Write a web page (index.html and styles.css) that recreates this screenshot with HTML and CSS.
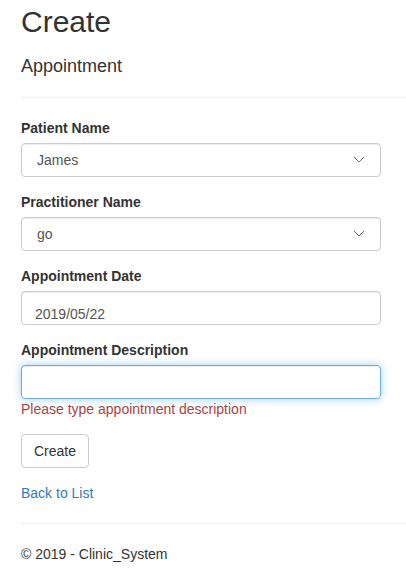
FILE: index.html
```html
<!DOCTYPE html>
<html>
<head>
<meta charset="utf-8">
<link rel="stylesheet" href="styles.css">
</head>
<body>
<div class="page">
  <h2 class="title">Create</h2>
  <form class="form">
    <h4 class="subtitle">Appointment</h4>
    <hr class="rule">
    <div class="group">
      <label class="label">Patient Name</label>
      <div class="select-wrap">
        <div class="control select">James</div>
        <svg class="chevron" width="12" height="7" viewBox="0 0 12 7"><path d="M1 1 L6 6 L11 1" fill="none" stroke="#666" stroke-width="1"/></svg>
      </div>
    </div>
    <div class="group">
      <label class="label">Practitioner Name</label>
      <div class="select-wrap">
        <div class="control select">go</div>
        <svg class="chevron" width="12" height="7" viewBox="0 0 12 7"><path d="M1 1 L6 6 L11 1" fill="none" stroke="#666" stroke-width="1"/></svg>
      </div>
    </div>
    <div class="group">
      <label class="label">Appointment Date</label>
      <div class="control date">2019/05/22</div>
    </div>
    <div class="group">
      <label class="label">Appointment Description</label>
      <div class="control focus"></div>
      <span class="error">Please type appointment description</span>
    </div>
    <div class="group">
      <button type="button" class="btn">Create</button>
    </div>
  </form>
  <div class="back"><a class="link" href="#">Back to List</a></div>
  <hr class="rule">
  <footer class="footer"><p class="copy">© 2019 - Clinic_System</p></footer>
</div>
</body>
</html>
```
FILE: styles.css
```css
* { box-sizing: border-box; }
html, body { margin: 0; padding: 0; background: #fff; }
body {
  font-family: "Liberation Sans", Arial, Helvetica, sans-serif;
  font-size: 14px;
  line-height: 20px;
  color: #333;
}
.page { padding: 5px 0 0 21px; }
.title {
  font-size: 30px;
  font-weight: 500;
  line-height: 33px;
  margin: 0 0 19px 0;
}
.form { margin: 0; }
.subtitle {
  font-size: 18px;
  font-weight: 500;
  line-height: 19.8px;
  margin: 0;
}
.rule {
  border: 0;
  border-top: 1px solid #eee;
  margin: 20px 0;
  height: 0;
}
.group { margin-bottom: 15px; }
.label {
  display: block;
  font-weight: bold;
  margin-bottom: 5px;
}
.control {
  width: 360px;
  height: 34px;
  padding: 6px 12px;
  border: 1px solid #ccc;
  border-radius: 4px;
  color: #555;
  background: #fff;
  box-shadow: inset 0 1px 1px rgba(0,0,0,.075);
}
.select-wrap { position: relative; width: 360px; }
.select { padding-left: 15px; }
.chevron { position: absolute; left: 332px; top: 13px; }
.date { padding: 12px 12px 0 13px; }
.focus {
  border-color: #66afe9;
  box-shadow: inset 0 1px 1px rgba(0,0,0,.075), 0 0 8px rgba(102,175,233,.6);
}
.error { display: block; color: #a94442; }
.btn {
  display: inline-block;
  font-family: inherit;
  font-size: 14px;
  line-height: 20px;
  padding: 6px 12px;
  height: 34px;
  color: #333;
  background: #fff;
  border: 1px solid #ccc;
  border-radius: 4px;
}
.back { margin: 0; }
.link { color: #337ab7; text-decoration: none; }
.footer { margin: 0; }
.copy { margin: 0 0 10px 0; }
```
